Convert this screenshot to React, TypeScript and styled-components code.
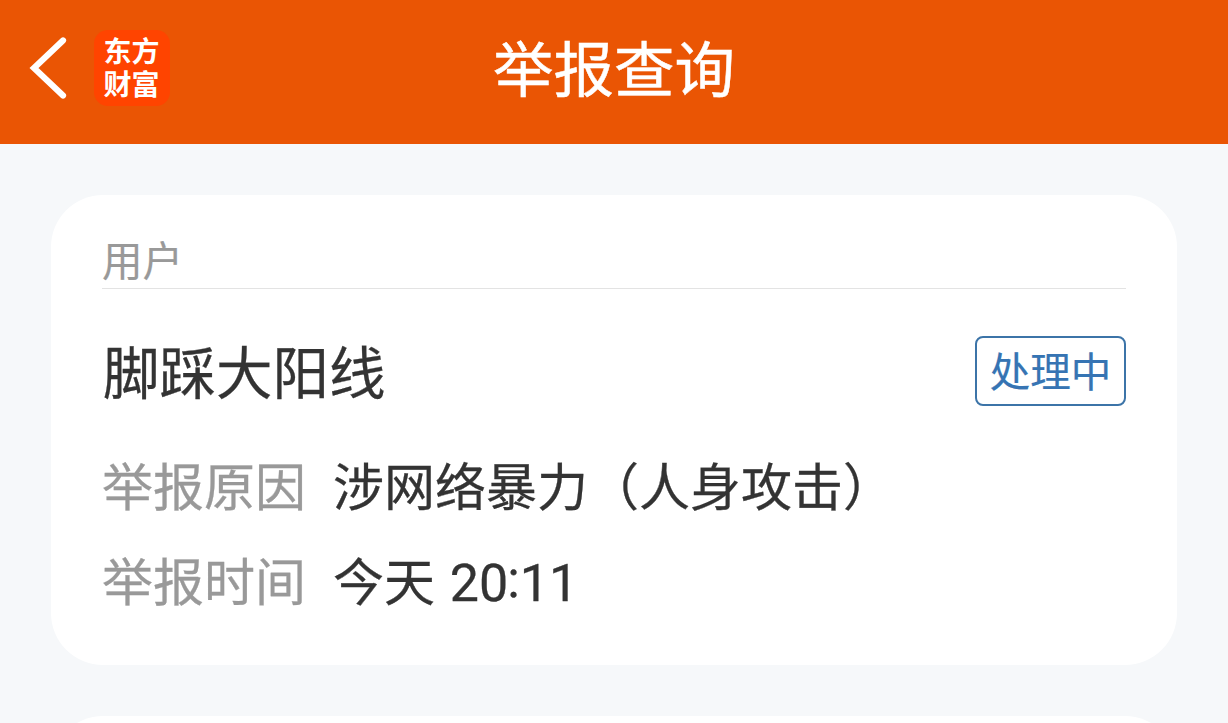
import { FC } from "react";
import styled, { createGlobalStyle } from "styled-components";

interface Report {
  user: string;
  status: string;
  reason: string;
  day: string;
  hour: string;
  minute: string;
}

const report: Report = {
  user: "脚踩大阳线",
  status: "处理中",
  reason: "涉网络暴力（人身攻击）",
  day: "今天",
  hour: "20",
  minute: "11",
};

const ReportCard: FC<{ report: Report }> = ({ report }) => {
  return (
    <Card>
      <CardLabel>用户</CardLabel>
      <UserRow>
        <UserName>{report.user}</UserName>
        <Status>{report.status}</Status>
      </UserRow>
      <InfoRow>
        <InfoLabel>举报原因</InfoLabel>
        <InfoValue>{report.reason}</InfoValue>
      </InfoRow>
      <InfoRow>
        <InfoLabel>举报时间</InfoLabel>
        <InfoValue>
          {report.day}{" "}
          <Clock>
            {report.hour}
            <Colon>:</Colon>
            {report.minute}
          </Clock>
        </InfoValue>
      </InfoRow>
    </Card>
  );
};

const App: FC = () => {
  return (
    <Page>
      <GlobalStyle />
      <Header>
        <HeaderSide>
          <BackButton aria-label="返回">
            <svg width="40" height="64" viewBox="0 0 40 64" fill="none">
              <path
                d="M35 4.5L6 32L35 59.5"
                stroke="#fff"
                strokeWidth="6.2"
                strokeLinecap="round"
              />
            </svg>
          </BackButton>
          <Logo>
            <span>东方</span>
            <span>财富</span>
          </Logo>
        </HeaderSide>
        <Title>举报查询</Title>
        <HeaderSide />
      </Header>
      <List>
        <ReportCard report={report} />
        <Card />
      </List>
    </Page>
  );
};

const GlobalStyle = createGlobalStyle`
  * {
    box-sizing: border-box;
  }

  body {
    margin: 0;
    overflow: hidden;
    font-family: Roboto, "Noto Sans CJK SC", sans-serif;
  }
`;

const Page = styled.div`
  display: flex;
  flex-direction: column;
  height: 100vh;
  overflow: hidden;
  background-color: #f6f8fa;
`;

const Header = styled.header`
  display: grid;
  grid-template-columns: 1fr auto 1fr;
  align-items: center;
  flex-shrink: 0;
  height: 144px;
  padding: 0 28px 8px;
  background-color: #ea5504;
`;

const HeaderSide = styled.div`
  display: flex;
  align-items: center;
  gap: 26px;
`;

const BackButton = styled.button`
  display: flex;
  padding: 0;
  border: 0;
  background: none;
  cursor: pointer;
`;

const Logo = styled.div`
  display: flex;
  flex-direction: column;
  align-items: center;
  justify-content: center;
  width: 76px;
  height: 76px;
  padding: 1px 1px 0 0;
  border-radius: 14px;
  background-color: #ff4400;
  color: #fff;
  font-size: 28px;
  font-weight: 700;
  line-height: 33px;
`;

const Title = styled.h1`
  margin: 0;
  padding-top: 7px;
  color: #fff;
  font-size: 60.5px;
  font-weight: 400;
  line-height: 80px;
  -webkit-text-stroke: 0.5px #fff;
`;

const List = styled.main`
  display: flex;
  flex-direction: column;
  gap: 51px;
  padding: 51px;
`;

const Card = styled.section`
  flex-shrink: 0;
  height: 470px;
  padding: 38px 51px 0;
  border-radius: 52px;
  background-color: #fff;
`;

const CardLabel = styled.div`
  height: 56px;
  border-bottom: 1px solid #e3e3e3;
  color: #999;
  font-size: 40.5px;
  line-height: 58px;
  -webkit-text-stroke: 0.2px #999;
`;

const UserRow = styled.div`
  display: flex;
  align-items: center;
  justify-content: space-between;
  height: 70px;
  margin: 47px 0 30px;
`;

const UserName = styled.div`
  padding: 8px 0 0 1px;
  color: #333;
  font-size: 56.5px;
  line-height: 70px;
  -webkit-text-stroke: 0.3px #333;
`;

const Status = styled.div`
  display: flex;
  align-items: center;
  justify-content: center;
  width: 151px;
  height: 70px;
  padding-bottom: 4px;
  border: 2px solid #3c74a8;
  border-radius: 8px;
  color: #3674b3;
  font-size: 40.5px;
  -webkit-text-stroke: 0.2px #3674b3;
`;

const InfoRow = styled.div`
  display: flex;
  align-items: center;
  gap: 27px;
  height: 95px;
  font-size: 51px;
`;

const InfoLabel = styled.span`
  color: #999;
  -webkit-text-stroke: 0.3px #999;
`;

const InfoValue = styled.span`
  color: #333;
  -webkit-text-stroke: 0.3px #333;
`;

const Clock = styled.span`
  margin-left: 2px;
  font-size: 52px;
  line-height: 1;
`;

// lifted to the middle of the digits
const Colon = styled.span`
  margin-left: -1px;
  line-height: 0;
  vertical-align: 4px;
`;

export default App;
